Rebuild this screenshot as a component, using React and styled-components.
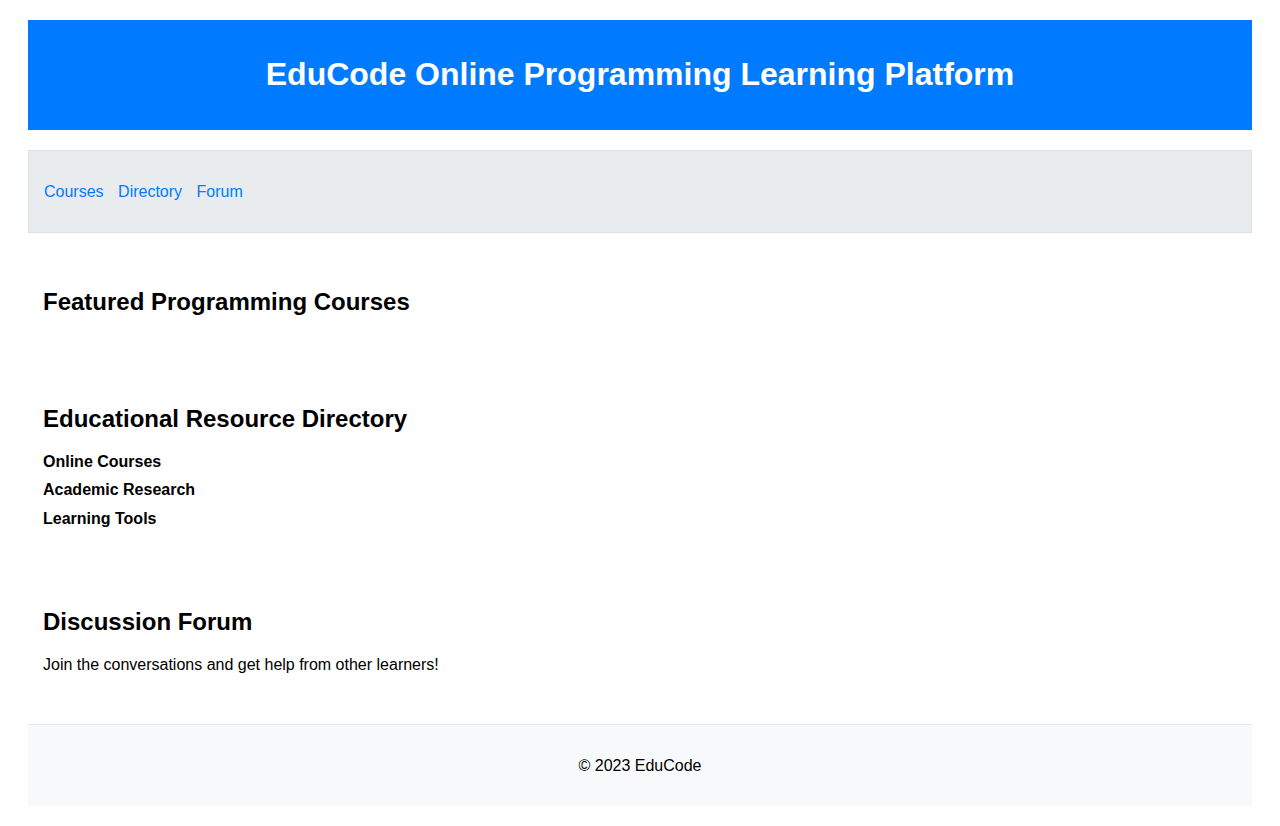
import React from "react";
import styled, { createGlobalStyle } from "styled-components";

const GlobalStyle = createGlobalStyle`
  html, body {
    margin: 0;
    padding: 0;
    background: #ffffff;
  }
  body {
    font-family: "Liberation Sans", Arial, sans-serif;
    font-size: 16px;
    color: #000000;
  }
`;

const Page = styled.div`
  padding: 20px 28px;
`;

const Header = styled.header`
  background: #007bff;
  color: #ffffff;
  text-align: center;
  padding: 15px;
`;

const Title = styled.h1`
  margin: 21.44px 0;
  font-size: 32px;
  font-weight: bold;
`;

const Nav = styled.nav`
  margin-top: 20px;
  background: #e9ecef;
  border: 1px solid #dee2e6;
  padding: 16px 15px 15px;
`;

const NavList = styled.ul`
  list-style: none;
  margin: 16px 0;
  padding: 0;
  display: flex;
  gap: 14.5px;
`;

const NavLink = styled.a`
  color: #007bff;
  text-decoration: none;
  line-height: 18.4px;
`;

const Section = styled.section`
  margin: 20px 0;
  padding: 15px;
`;

const SectionTitle = styled.h2`
  margin: 19.92px 0 19.3px;
  font-size: 24px;
  font-weight: bold;
`;

const ResourceList = styled.ul`
  list-style: none;
  margin: 0;
  padding: 0;
`;

const ResourceItem = styled.li`
  font-weight: bold;
  margin-bottom: 10px;
  line-height: 18.4px;
`;

const Lead = styled.p`
  margin: 20.3px 0 15px;
`;

const Footer = styled.footer`
  background: #f8f9fa;
  border-top: 1px solid #e6e6ea;
  text-align: center;
  padding: 16px 15px 15px;
`;

const Copyright = styled.p`
  margin: 16px 0;
`;

export default function App() {
  return (
    <>
      <GlobalStyle />
      <Page>
        <Header>
          <Title>EduCode Online Programming Learning Platform</Title>
        </Header>
        <Nav>
          <NavList>
            <li><NavLink href="#courses">Courses</NavLink></li>
            <li><NavLink href="#directory">Directory</NavLink></li>
            <li><NavLink href="#forum">Forum</NavLink></li>
          </NavList>
        </Nav>
        <Section id="courses">
          <SectionTitle>Featured Programming Courses</SectionTitle>
        </Section>
        <Section id="directory">
          <SectionTitle>Educational Resource Directory</SectionTitle>
          <ResourceList>
            <ResourceItem>Online Courses</ResourceItem>
            <ResourceItem>Academic Research</ResourceItem>
            <ResourceItem>Learning Tools</ResourceItem>
          </ResourceList>
        </Section>
        <Section id="forum">
          <SectionTitle>Discussion Forum</SectionTitle>
          <Lead>Join the conversations and get help from other learners!</Lead>
        </Section>
        <Footer>
          <Copyright>© 2023 EduCode</Copyright>
        </Footer>
      </Page>
    </>
  );
}
